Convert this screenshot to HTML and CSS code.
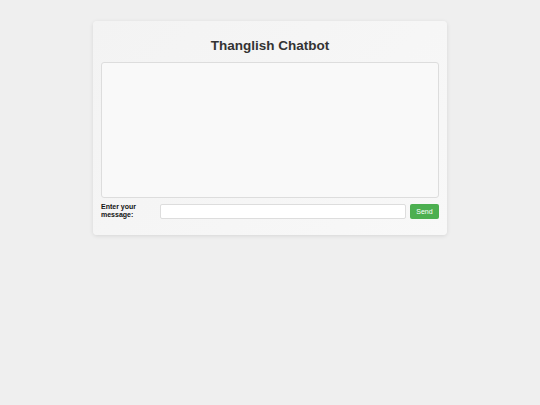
FILE: index.html
```html
<!DOCTYPE html>
<html lang="en">
<head>
    <meta charset="UTF-8">
    <meta name="viewport" content="width=device-width, initial-scale=1.0">
    <title>Thanglish Chatbot</title>
    <link rel="stylesheet" href="styles.css">
</head>
<body>
    <div class="container">
        <h1>Thanglish Chatbot</h1>
        <!-- chat log -->
        <div class="chat-box" id="chat-box"></div>
        <!-- input row -->
        <form class="chat-form" action="#">
            <label for="message">Enter your message:</label>
            <input type="text" id="message" name="message">
            <button type="submit">Send</button>
        </form>
    </div>
</body>
</html>
```

FILE: styles.css
```css
body {
    font-family: "Liberation Sans", Arial, sans-serif;
    background-color: #efefef;
    color: #333;
    margin: 0;
    padding: 0;
}
.container {
    width: 338px;
    margin: 21px auto;
    padding: 8px 8px 16px;
    background: linear-gradient(135deg, #f3f3f3, #f8f8f8);
    border-radius: 4px;
    box-shadow: 0 1px 4px rgba(0, 0, 0, 0.1);
}
h1 {
    font-size: 13.5px;
    line-height: 18px;
    text-align: center;
    color: #333;
    margin: 8px 0 7px;
}
.chat-box {
    height: 134px;
    background-color: #f9f9f9;
    border: 1px solid #ddd;
    border-radius: 3px;
}
.chat-form {
    display: flex;
    align-items: center;
    gap: 4px;
    margin-top: 5px;
}
.chat-form label {
    width: 55px;
    font-size: 7px;
    line-height: 8px;
    font-weight: bold;
    color: #111;
}
.chat-form input[type="text"] {
    flex: 1;
    height: 15px;
    box-sizing: border-box;
    padding: 2px 4px;
    border: 1px solid #ddd;
    border-radius: 2px;
    background-color: #fff;
    font-size: 7px;
}
.chat-form button {
    width: 29px;
    height: 15px;
    padding: 0;
    border: none;
    border-radius: 2px;
    background-color: #4caf50;
    color: #fff;
    font-family: "Liberation Sans", Arial, sans-serif;
    font-size: 7px;
    cursor: pointer;
}
```
